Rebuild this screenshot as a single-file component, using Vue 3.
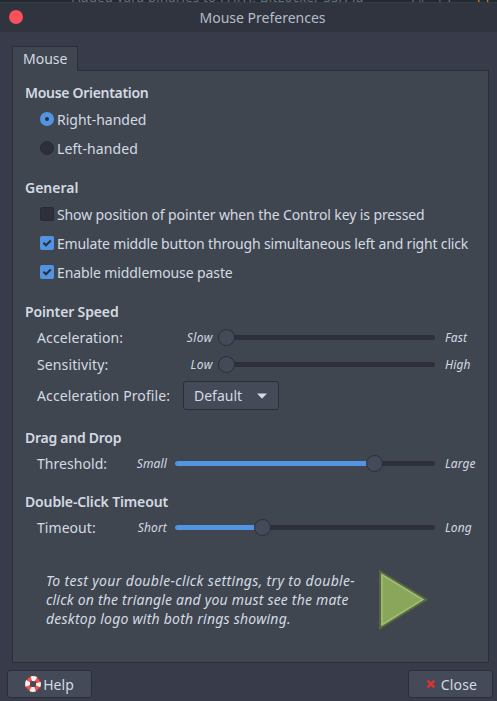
<script setup>
import { ref } from 'vue'

const hand = ref('right')
const options = ref([
  { label: 'Show position of pointer when the Control key is pressed', on: false, cls: 'c1' },
  { label: 'Emulate middle button through simultaneous left and right click', on: true, cls: 'c2' },
  { label: 'Enable middlemouse paste', on: true, cls: 'c3' }
])
const speed = [
  { label: 'Acceleration:', low: 'Slow', high: 'Fast', value: 0 },
  { label: 'Sensitivity:', low: 'Low', high: 'High', value: 0 }
]
</script>

<template>
  <div class="window">
    <div class="behind">
      <span class="b1">Added yara binaries to PATH, BitLocker SSH id</span>
      <span class="b2">·) # &nbsp; | )</span>
      <span class="b3">[ ]</span>
    </div>
    <header class="titlebar">
      <span class="close-dot"></span>
      <span class="title">Mouse Preferences</span>
    </header>
    <main class="body">
      <div class="tab"><span>Mouse</span></div>
      <section class="panel">
        <h2><span class="h-a">Mouse Orientation</span></h2>
        <div class="choices">
          <div class="choice" @click="hand = 'right'">
            <span class="radio" :class="{ on: hand === 'right' }"></span><span>Right-handed</span>
          </div>
          <div class="choice" @click="hand = 'left'">
            <span class="radio" :class="{ on: hand === 'left' }"></span><span class="left">Left-handed</span>
          </div>
        </div>

        <h2><span>General</span></h2>
        <div class="choices">
          <div v-for="o in options" :key="o.label" class="choice" @click="o.on = !o.on">
            <span class="check" :class="{ on: o.on }">
              <svg v-if="o.on" viewBox="0 0 14 14" width="14" height="14"><path d="M3.4 6.8l2.6 2.5 4.8-4.9" fill="none" stroke="#2b2f3b" stroke-width="2.1" /></svg>
            </span><span :class="o.cls">{{ o.label }}</span>
          </div>
        </div>

        <h2><span class="h-b">Pointer Speed</span></h2>
        <div class="rows">
          <div v-for="s in speed" :key="s.label" class="slider-row short">
            <span class="name">{{ s.label }}</span>
            <span class="low">{{ s.low }}</span>
            <div class="track"><div class="fill" :style="{ width: s.value + '%' }"></div><i class="thumb"></i></div>
            <span class="high">{{ s.high }}</span>
          </div>
          <div class="profile">
            <span class="name">Acceleration Profile:</span>
            <div class="select"><span>Default</span>
              <svg width="10" height="6" viewBox="0 0 10 6"><path d="M0 .5h10L5 5.7z" fill="#d3dae3" /></svg>
            </div>
          </div>
        </div>

        <h2><span class="h-c">Drag and Drop</span></h2>
        <div class="rows">
          <div class="slider-row">
            <span class="name">Threshold:</span><span class="low">Small</span>
            <div class="track"><div class="fill" :style="{ width: '78.5%' }"></div><i class="thumb"></i></div>
            <span class="high">Large</span>
          </div>
        </div>

        <h2><span class="h-b">Double-Click Timeout</span></h2>
        <div class="rows">
          <div class="slider-row">
            <span class="name">Timeout:</span><span class="low">Short</span>
            <div class="track"><div class="fill" :style="{ width: '35.4%' }"></div><i class="thumb"></i></div>
            <span class="high">Long</span>
          </div>
        </div>

        <div class="test">
          <p><span class="t1">To test your double-click settings, try to double-</span><br><span class="t2">click on the triangle and you must see the mate</span><br><span class="t3">desktop logo with both rings showing.</span></p>
          <svg class="triangle" width="50" height="60" viewBox="0 0 50 60">
            <path d="M1.2 1.6V58L47.2 29.6z" fill="#8aa65a" stroke="#566b40" stroke-width="2" />
            <path d="M3 4.8V54.8L43.6 29.6z" fill="#8aa65a" stroke="#9fbc76" stroke-width="1.6" />
          </svg>
        </div>
      </section>
    </main>
    <footer class="actions">
      <button class="help">
        <svg width="16" height="16" viewBox="0 0 16 16">
          <circle cx="8" cy="8" r="5.5" fill="none" stroke="#c23a37" stroke-width="4.8" />
          <circle cx="8" cy="8" r="5.5" fill="none" stroke="#ee5450" stroke-width="3.4" />
          <circle cx="8" cy="8" r="5.5" fill="none" stroke="#f4f3ef" stroke-width="4.8" stroke-dasharray="4.8 3.839" stroke-dashoffset="2.4" />
        </svg><span>Help</span>
      </button>
      <button class="close">
        <svg width="10" height="10" viewBox="0 0 10 10"><path d="M1.6 1.6l6.8 6.8M8.4 1.6L1.6 8.4" stroke="#d93431" stroke-width="2.5" /></svg><span>Close</span>
      </button>
    </footer>
  </div>
</template>

<style>
body { margin: 0; background: #383c4a; }
</style>

<style scoped>
.window {
  width: 497px; height: 701px; box-sizing: border-box; overflow: hidden;
  display: flex; flex-direction: column;
  background: #383c4a; color: #d3dae3;
  font: 14px/19px "Noto Sans", sans-serif;
}
span { white-space: nowrap; }
.behind { height: 2px; overflow: hidden; display: flex; align-items: flex-end; padding-left: 72px; background: #232a2f; color: #66707a; font-size: 13px; line-height: 9px; flex: none; }
.b1 { width: 335px; letter-spacing: .3px; }
.b2 { width: 70px; }
.b3 { color: #d98424; }
.titlebar { height: 30px; box-sizing: border-box; flex: none; display: grid; grid-template-columns: 32px 1fr 4px; align-items: center; background: #2f343f; border-top: 1px solid #353d49; }
.close-dot { width: 14px; height: 14px; margin: 0 0 1px 9px; border-radius: 50%; background: #f9515b; }
.title { text-align: center; color: #b5bcc8; }
.body { height: 631px; box-sizing: border-box; padding: 14px 8px 0 12px; flex: none; display: flex; flex-direction: column; }
.tab { width: 66px; height: 25px; box-sizing: border-box; border: 1px solid #2b2e39; border-bottom: 0; background: #404650; padding: 2px 0 0 10px; margin-bottom: -1px; z-index: 1; }
.panel { height: 593px; box-sizing: border-box; width: 477px; border: 1px solid #2b2e39; background: #404650; padding: 12px 0 0 12px; }
h2 { margin: 0; height: 20px; font-size: 14px; line-height: 20px; font-weight: 600; }
.h-a { letter-spacing: -.3px; }
.h-b { letter-spacing: -.14px; }
.h-c { letter-spacing: -.26px; }
.choices { padding: 2px 0 15px 15px; }
.choice { height: 29px; display: flex; align-items: center; gap: 3px; }
.left { letter-spacing: .1px; }
.c1 { letter-spacing: -.11px; }
.c2 { letter-spacing: -.17px; }
.c3 { letter-spacing: -.1px; }
.radio, .check { width: 14px; height: 14px; margin-bottom: 1px; box-sizing: border-box; background: #2d303b; border: 1px solid #282b35; flex: none; display: flex; }
.radio { border-radius: 50%; align-items: center; justify-content: center; }
.check { border-radius: 2px; }
.on { background: #5294e2; border: 0; }
.radio.on::after { content: ""; width: 4px; height: 4px; border-radius: 50%; background: #2b2f3b; }
.rows { padding: 2px 0 15px 12px; }
.name { letter-spacing: .12px; }
.slider-row { height: 27px; display: grid; grid-template-columns: 90px 40px 260px 40px; align-items: center; }
.slider-row:not(.short) .name { letter-spacing: .05px; }
.slider-row.short { grid-template-columns: 130px 46px 217px 40px; }
.slider-row .track { margin-left: 8px; width: 260px; }
.slider-row.short .track { width: 217px; margin-left: 5px; }
.low, .high { font-size: 12px; font-style: italic; }
.low { text-align: right; letter-spacing: .15px; }
.short .low { letter-spacing: .5px; }
.high { margin-left: 18px; letter-spacing: .1px; }
.short .high { margin-left: 15px; }
.track { height: 5px; border-radius: 3px; background: #2d303b; display: flex; align-items: center; }
.fill { height: 5px; border-radius: 3px 0 0 3px; background: #5294e2; flex: none; }
.thumb { width: 17px; height: 17px; box-sizing: border-box; border: 1px solid #2b2e39; border-radius: 50%; background: #444a58; flex: none; }
.slider-row:not(.short) .thumb { margin-left: -13px; }
.profile { height: 29px; margin: 3px 0; display: flex; align-items: center; }
.profile .name { width: 146px; }
.select { width: 96px; height: 29px; box-sizing: border-box; display: flex; align-items: center; justify-content: space-between; padding: 0 11px 0 10px; border: 1px solid #2b2e39; border-radius: 3px; background: #444a58; }
.test { display: flex; padding: 14px 0 0 21px; }
.test p { margin: 1px 0 0; width: 333px; font-style: italic; white-space: nowrap; }
.t1 { letter-spacing: .34px; }
.t2 { letter-spacing: .2px; }
.t3 { letter-spacing: .23px; }
.actions { display: flex; justify-content: space-between; padding: 7px 4px 0 7px; }
button { width: 85px; height: 28px; box-sizing: border-box; display: flex; align-items: center; justify-content: center; padding: 0; border: 1px solid #2b2e39; border-radius: 3px; background: #444a58; color: inherit; font: inherit; }
.help { gap: 2px; }
.close { gap: 5px; padding-left: 2px; }
.close span { letter-spacing: .15px; }
</style>
